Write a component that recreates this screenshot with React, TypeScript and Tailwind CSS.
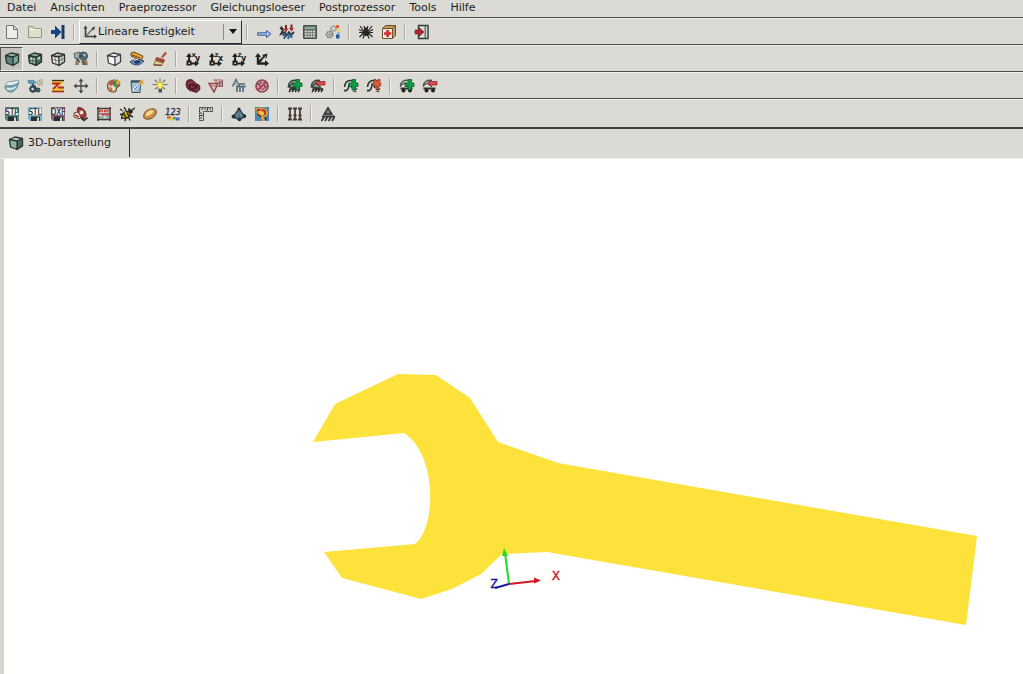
import type { ReactNode } from "react";

interface Tool {
  /** Accessible name of the button */
  label: string;
  icon: ReactNode;
  /** Shown as pressed in */
  active?: boolean;
}

interface IconProps {
  children: ReactNode;
}

/** 16x16 drawing area shared by all toolbar icons. */
function Icon({ children }: IconProps) {
  return (
    <svg viewBox="0 0 16 16" className="h-4 w-4 shrink-0" fill="none" aria-hidden="true">
      {children}
    </svg>
  );
}

interface CubeProps {
  front: string;
  top: string;
  side: string;
  line?: string;
  children?: ReactNode;
}

function Cube({ front, top, side, line = "#26302c", children }: CubeProps) {
  return (
    <Icon>
      <path d="M1.5 4.5 7 2l7.5 1.5L9 6z" fill={top} />
      <path d="M1.5 4.5 9 6v8.5L2.5 12z" fill={front} />
      <path d="M9 6l5.500-2.500V11L9 14.500z" fill={side} />
      {children}
      <path
        d="M1.500 4.500 7 2l7.500 1.500V11L9 14.500 2.500 12zM1.500 4.500 9 6v8.500M9 6l5.500-2.500"
        stroke={line}
        strokeWidth="1.300"
        strokeLinejoin="round"
      />
    </Icon>
  );
}

interface FloppyProps {
  text: string;
  color: string;
}

function Floppy({ text, color }: FloppyProps) {
  return (
    <Icon>
      <path d="M1 1h14v14H3l-2-2z" fill={color} />
      <path d="M2 2h12v7H2z" fill="#f1f3f1" />
      <text x="8" y="8.500" textAnchor="middle" fontSize="8" fontFamily="DejaVu Sans Condensed, sans-serif" fill="#1d2426" stroke="#1d2426" strokeWidth="0.200">
        {text}
      </text>
      <path d="M4 10.500h9V15H4z" fill="#24302e" />
      <path d="M10 11.500h2V15h-2z" fill="#d3d8d2" />
    </Icon>
  );
}

interface AxesProps {
  up: string;
  right: string;
}

function AxesView({ up, right }: AxesProps) {
  return (
    <Icon>
      <path d="M4 13V4M3 12.500h9" stroke="#222" strokeWidth="2" />
      <path d="M1 6l3-4 3 4zM10 9.500l4 3-4 3zM1.500 9.500h5v5h-5z" fill="#222" />
      <path d="M3.500 11.500h1.500v1.500H3.500z" fill="#dbdad5" />
      <text x="6.500" y="6" fontSize="7" fontWeight="bold" fontFamily="DejaVu Sans, sans-serif" fill="#222">
        {up}
      </text>
      <text x="10" y="10" fontSize="8" fontWeight="bold" fontFamily="DejaVu Sans, sans-serif" fill="#222">
        {right}
      </text>
    </Icon>
  );
}

const plus = <path d="M9 1.500h3.500V5H15v3.500h-2.500V12H9V8.500H6V5h3z" fill="#139a46" stroke="#0a5b2b" strokeWidth="0.800" />;
const minus = <path d="M6.500 3.500H15V7H6.500z" fill="#dd4a4c" stroke="#8d2a2d" strokeWidth="0.800" />;

interface SelectionProps {
  kind: "surface" | "curve" | "node";
  sign: ReactNode;
}

/** Boundary condition icons: a dark symbol with a plus or minus on top. */
function SelectionIcon({ kind, sign }: SelectionProps) {
  return (
    <Icon>
      {kind === "surface" && (
        <>
          <path d="M1.500 9C1 4 5 1.500 10 2.500M1.500 9l4-4 5 4-2 1z" stroke="#33443b" strokeWidth="1.300" fill="#93a698" />
          <path d="M2.500 11h10.500" stroke="#222" strokeWidth="1.600" />
          <path d="M2 14l2-3M5 14l2-3M8 14l2-3M11 14l2-3" stroke="#222" strokeWidth="1.400" />
        </>
      )}
      {kind === "curve" && (
        <>
          <path d="M1.500 9C2 3 6 1.500 11 3M1 12.500c4 1 5-3 5-7M7 5l2 5" stroke="#26332c" strokeWidth="1.500" />
          <path d="M1 12.500h3M10 13.500l4-3M11 11l2 3" stroke="#35442b" strokeWidth="1.500" />
        </>
      )}
      {kind === "node" && (
        <>
          <path d="M1.500 9C1 4 5 1.500 10 2.500M2 7l4-2 4 4" stroke="#4a504c" strokeWidth="1.300" />
          <path d="M1.500 9.500h12v2h-12z" fill="#3a3535" />
          <circle cx="4.500" cy="12.500" r="2" fill="#26211f" />
          <circle cx="11" cy="12.500" r="2" fill="#26211f" />
        </>
      )}
      {sign}
    </Icon>
  );
}

const axesIcon = (
  <Icon>
    <path d="M3.500 3v9.500H14" stroke="#3a3e3c" strokeWidth="1.600" />
    <path d="M4 12l8-8.500" stroke="#666a67" strokeWidth="1.300" />
    <path d="M1.500 4.500l2-3 2 3zM12 10.500l3 2-3 2zM9.500 4l3.500-1.500-1 4z" fill="#3a3e3c" />
  </Icon>
);

const isometry = (
  <Icon>
    <path d="M4 13V4M3 12.500h9M4 12l7-7" stroke="#242424" strokeWidth="2.400" />
    <path d="M1 6l3-4 3 4zM11 9l4 3.500-4 3zM8 4l5.500-1.500-1 5z" fill="#242424" />
    <path d="M8 9l4-4" stroke="#9a9a96" />
  </Icon>
);

const newFile = (
  <Icon>
    <path d="M2.500 1.500h7l4 4v9h-11z" fill="#eeeeeb" stroke="#737572" />
    <path d="M9.500 1.500v4h4" stroke="#737572" />
  </Icon>
);

const openFolder = (
  <Icon>
    <path d="M1.500 13.500v-11H6l1 2h7.500v9z" fill="#e0dfca" stroke="#93937e" />
    <path d="M2 5.500h12" stroke="#f6f5e6" />
  </Icon>
);

const importIcon = (
  <Icon>
    <path d="M1 6h4V1.500L11.500 8 5 14.500V10H1z" fill="#17428c" />
    <path d="M11.500 1h3v14h-3z" fill="#1c3868" />
  </Icon>
);

const arrowRight = (
  <Icon>
    <path d="M1.500 8.800h9V6.500l4.500 3.500-4.500 3.500v-2.300h-9z" fill="#a9c1ea" stroke="#3c5aa0" />
  </Icon>
);

const solverIcon = (
  <Icon>
    <path d="M7 1v5M12.500 0.500v5" stroke="#7e2226" strokeWidth="2" />
    <path d="M4.500 4.500h5L7 8zM10 4h5l-2.500 3.500z" fill="#b92b30" />
    <path d="M1 4l3 2-2 4 4-2 1 4 3-4 2 3 3-3" stroke="#28343e" strokeWidth="1.800" />
    <path d="M3 10l3 2-1 3M8 10l2 2-1 3M13 10l-1 4" stroke="#34608e" strokeWidth="2" />
    <path d="M2 2.500l2 3" stroke="#28343e" strokeWidth="1.500" />
  </Icon>
);

const calculator = (
  <Icon>
    <path d="M1.500 1.500h13v13h-13z" fill="#69736c" stroke="#465049" />
    <path d="M3 3h10v2H3z" fill="#8caa93" />
    <path d="M3 7.500h10M3 10h10M3 12.500h10" stroke="#dfe2dc" strokeWidth="1.400" strokeDasharray="1.900 0.800" />
  </Icon>
);

const gears = (
  <Icon>
    <circle cx="4.500" cy="10.500" r="3" fill="#d6d8d7" stroke="#7d8182" strokeWidth="2" strokeDasharray="2 0.700" />
    <circle cx="8.500" cy="4.500" r="2.500" fill="#d6d8d7" stroke="#8e9193" strokeWidth="1.700" strokeDasharray="1.600 0.600" />
    <circle cx="4.500" cy="10.500" r="1" fill="#5c6061" />
    <path d="M11 1h3v3h-3z" fill="#e26045" />
    <path d="M12 4h3v4h-3z" fill="#efd650" />
    <path d="M12 8h3v2.500h-3z" fill="#75c5dc" />
    <path d="M11 10.500h3.500v4H11z" fill="#31559f" />
  </Icon>
);

const spider = (
  <Icon>
    <path d="M2 2l4 5M6 2l1.500 4M14 2l-4 5M10 2 8.500 6M1 8.500h14M1.500 13l4-4M14.500 13l-4-4M5 14.500l1.500-4M11 14.500l-1.500-4M1 5.500l4 2M15 5.500l-4 2" stroke="#252623" strokeWidth="1.200" />
    <circle cx="8" cy="5.500" r="2" fill="#252623" />
    <ellipse cx="8" cy="9" rx="3.200" ry="3" fill="#252623" />
  </Icon>
);

const firstAid = (
  <Icon>
    <path d="M1.500 4.500l3-3h10v10l-3 3h-10z" fill="#c09a60" stroke="#66512c" />
    <path d="M1.500 4.500h10v10h-10z" fill="#f0e9dc" stroke="#66512c" />
    <path d="M11.500 4.500l3-3" stroke="#66512c" />
    <path d="M5.300 6h2.600v2.200h2.300v2.600H7.900V13H5.300v-2.200H3V8.200h2.300z" fill="#d12a30" />
  </Icon>
);

const exitIcon = (
  <Icon>
    <path d="M4.500 1.500h9.500v13H4.500z" fill="#d6dcda" stroke="#333a39" strokeWidth="1.400" />
    <path d="M10.500 2h1.500v12h-1.500z" fill="#68746f" />
    <path d="M1 6h4V3.500L10 8l-5 4.500V10H1z" fill="#b3262d" stroke="#7a1a20" strokeWidth="0.600" />
  </Icon>
);

const viewer = (
  <Icon>
    <path d="M1 2.500l6-1.500v6L2 7.500z" fill="#9aa9ad" stroke="#5c686d" />
    <circle cx="10.500" cy="5" r="4" fill="#4b6e88" stroke="#3d4a53" />
    <path d="M3 8h3v6H2zM8 9h6l1 5H9z" fill="#8d8068" />
    <path d="M4 8l3 3M7 5h3M10 10l2 4" stroke="#4e4535" strokeWidth="1.400" />
    <circle cx="11.500" cy="4" r="1.300" fill="#a4bfce" />
  </Icon>
);

const layers = (
  <Icon>
    <path d="M2 2l3-1 9 4-1 3-3 1-8-4z" fill="#dea138" stroke="#694b20" />
    <path d="M3 4l8 3" stroke="#694b20" />
    <path d="M1 11c3-3 9-3 14-1-3 4-9 6-14 1z" fill="#6f93bb" stroke="#29406a" />
    <ellipse cx="8" cy="11" rx="3" ry="1.700" fill="#22375c" />
    <path d="M5 9l4-.5" stroke="#dce8ef" />
  </Icon>
);

const brush = (
  <Icon>
    <path d="M14 1.500 9.500 7" stroke="#c18d71" strokeWidth="2.600" />
    <path d="M14 1.500 10.500 6" stroke="#b1392c" strokeWidth="1.300" />
    <path d="M4.500 6.500l8 2.500-1 2.500-8-2z" fill="#ba4937" stroke="#69221c" strokeWidth="0.700" />
    <path d="M3.500 9.500l7.500 2.500-1.500 2.500-8-.5z" fill="#e3cd95" stroke="#806436" strokeWidth="0.800" />
    <path d="M2 13.800l8 .5" stroke="#6b2a1e" />
  </Icon>
);

const dish = (
  <Icon>
    <path d="M1 8c0 4 3 6 6 6s6-3 7.500-9C11 8 5 9 1 8z" fill="#84b4bf" stroke="#567f8b" />
    <path d="M2 7c0-3 3-4 6-3.500L14 2l1 2c-3 3-9 4.500-13 3z" fill="#e3eeee" stroke="#7b9ba2" />
    <path d="M3 10.500c3 1 6 .5 9-1.500" stroke="#e5f3f2" strokeWidth="1.400" />
  </Icon>
);

const satellite = (
  <Icon>
    <path d="M1 2.500h6l2 2-3 2-5-2z" fill="#5b9cba" stroke="#41728a" strokeWidth="0.600" />
    <circle cx="6" cy="11" r="3.300" fill="#3b555f" stroke="#24363e" />
    <circle cx="5.500" cy="11" r="1.200" fill="#d9e4e6" />
    <circle cx="11" cy="12" r="2" fill="#3e6d85" stroke="#24363e" />
    <path d="M5 6l4 3" stroke="#2f4954" strokeWidth="1.500" />
    <path d="M10 2.500c1 1 1 3 0 4.500M12 1.500c1.500 2 1.500 5 0 6.500M14 1c1.500 2.500 1.500 5 0 7" stroke="#9a9a5e" />
  </Icon>
);

const zIcon = (
  <Icon>
    <path d="M2 2h12v3L8 9h6v5H2v-3l6-4H2z" fill="#efc63d" />
    <path d="M2 2.500h12" stroke="#3c2a24" strokeWidth="1.300" />
    <path d="M2 5.500h7l-6 5.500M8 9.500h6" stroke="#b42c26" strokeWidth="1.800" />
    <path d="M2 13.500h12" stroke="#a22a25" strokeWidth="1.600" />
  </Icon>
);

const move = (
  <Icon>
    <path d="M8 3v10M3 8h10" stroke="#454743" strokeWidth="1.300" />
    <path d="M8 0.500 5.500 3.500h5zM8 15.500l-2.500-3h5zM0.500 8l3-2.500v5zM15.500 8l-3-2.500v5z" fill="#454743" />
  </Icon>
);

const palette = (
  <Icon>
    <path d="M1.500 8c0-4 3-6 7-6s6 2 5 5-3 1-3 3 0 4-3 4-6-2-6-6z" fill="#dfcda5" stroke="#5f4634" strokeWidth="1.200" />
    <path d="M2.500 5l4-3 1 4-3 2z" fill="#c54c3b" />
    <path d="M7 3l4 0 2 4-4 2-2-2z" fill="#39875b" />
    <path d="M3 9l3 1 1 4-3-1z" fill="#cf6a46" />
    <path d="M6 8l3 3-2 1z" fill="#f3efdc" />
    <path d="M12 1l.8 1.700L15 3l-1.500 1.500L14 7l-2-1-2 1 .5-2.500L9 3l2.200-.3z" fill="#dfa93a" />
  </Icon>
);

const notepad = (
  <Icon>
    <path d="M2 3h10l-1 11.500H3z" fill="#9dbed5" stroke="#36566b" />
    <path d="M2 3.500h10" stroke="#36454e" strokeWidth="2" />
    <path d="M4 12.500l7-7" stroke="#edf5f8" strokeWidth="2.400" />
    <path d="M5 12l6.500-7" stroke="#51646d" />
    <path d="M12.500 1l.8 1.700 2.200.3L14 4.500l.5 2.500-2-1-2 1 .5-2.500L9.500 3l2.200-.3z" fill="#dfa93a" />
  </Icon>
);

const bulb = (
  <Icon>
    <path d="M8 0.500v2.500M3 2l2 2M13 2l-2 2M0.500 6.500H4M12 6.500h3.500M3 11l2-1.500M13 11l-2-1.500" stroke="#77753f" strokeWidth="1.100" />
    <path d="M8 4a3 3 0 0 0-2 5.300V11h4V9.300A3 3 0 0 0 8 4z" fill="#fbf15c" stroke="#8c8540" strokeWidth="0.800" />
    <path d="M6.500 11h3.500v3.500H6.500z" fill="#4f5560" />
  </Icon>
);

const part = (
  <Icon>
    <path d="M1.500 4c1-3 5-3 7-1l3 3c3 0 4 3 3 6l-3 2.500L7 13c-4 0-7-5-5.500-9z" fill="#742936" stroke="#481d25" />
    <ellipse cx="8" cy="9" rx="3.500" ry="2" stroke="#43171f" strokeWidth="1.300" transform="rotate(20 8 9)" />
    <path d="M3.500 5l4-1M6 9h3M10 12l3-1" stroke="#a86570" strokeDasharray="1.500 1" />
  </Icon>
);

const triangleMesh = (
  <Icon>
    <path d="M1 5.500h9L6 14z" stroke="#9b414b" strokeWidth="1.500" />
    <path d="M5.500 2h9v6.500H9.500M3 8h5M8 2v5M11.500 3v5M8 5h6" stroke="#a9525b" />
    <path d="M12 4h3M12 7h3" stroke="#555" />
  </Icon>
);

const elementType = (
  <Icon>
    <path d="M1.500 8.500 5 1.500l3.500 7M3 6h4" stroke="#68777b" strokeWidth="1.700" />
    <path d="M3 6.500l3-3 1 4z" fill="#a9b5b9" />
    <path d="M5 8.500h10M6 14V9M9 9v5M12 9v5M8 6h6" stroke="#496378" strokeWidth="1.600" />
  </Icon>
);

const forbidden = (
  <Icon>
    <circle cx="8" cy="8" r="6" fill="#d6a9b1" stroke="#8d4455" strokeWidth="1.700" />
    <path d="M3 7l5-3M8 12l5-4M5 5l2 6M10 4l1 5" stroke="#7a5a66" strokeWidth="1.500" />
    <path d="M4 12l8-8" stroke="#c23a46" strokeWidth="2" />
  </Icon>
);

const rocket = (
  <Icon>
    <path d="M5 1.500c5 0 8 3 8 8l-2 3C6 12 3 7 5 1.500z" fill="#a3392f" stroke="#54221f" />
    <circle cx="8.500" cy="6.500" r="2" fill="#e8dcd7" />
    <path d="M1 7l4-1 3 5-2 2-5-2z" fill="#f0e4df" stroke="#6b3a35" />
    <path d="M2 9l4 2" stroke="#9e3a33" strokeWidth="1.400" />
    <path d="M8 12l3 2.500 3.500-3" stroke="#3d2824" strokeWidth="1.700" />
  </Icon>
);

const abacus = (
  <Icon>
    <path d="M2 1v14M14 1v14M1 2.500h14M1 13.500h14" stroke="#463634" strokeWidth="1.500" />
    <path d="M3 8h10" stroke="#463634" />
    <path d="M3 5h4M8 5h5M6 8.500h7" stroke="#cf4444" strokeWidth="2.600" strokeDasharray="2 0.500" />
    <path d="M3 11.500h5M10 11.500h3" stroke="#629ba1" strokeWidth="2" strokeDasharray="2 0.500" />
  </Icon>
);

const bee = (
  <Icon>
    <path d="M1 3l6 4M5 1l3 5M13 4l3-2M10 2v3M1 8.500l6-1M2 13l4-4M6 15l1-4M11 14.500 9 10M14 11l-4-2" stroke="#252519" strokeWidth="1.400" />
    <ellipse cx="7" cy="9" rx="4.500" ry="3" fill="#d7b51e" stroke="#282716" strokeWidth="1.300" transform="rotate(-30 7 9)" />
    <path d="M5 8l2 4M8 6.500l2 4" stroke="#282716" strokeWidth="1.500" />
    <circle cx="11.500" cy="5.500" r="2.300" fill="#282716" />
    <path d="M3 4.500l4 2" stroke="#e6dfa0" />
  </Icon>
);

const planet = (
  <Icon>
    <ellipse cx="8" cy="8" rx="7" ry="4.500" fill="#cf8f42" stroke="#7e522c" transform="rotate(-32 8 8)" />
    <ellipse cx="7.500" cy="7" rx="4.500" ry="2" fill="#f7d592" transform="rotate(-32 7.500 7)" />
  </Icon>
);

const colorNumbers = (
  <Icon>
    <text x="8" y="9" textAnchor="middle" fontSize="9" fontStyle="italic" fontFamily="DejaVu Sans Condensed, sans-serif" fill="#272d43" stroke="#272d43" strokeWidth="0.300">
      123
    </text>
    <path d="M2 10h4v3H2z" fill="#dc7a39" />
    <path d="M5 11.500h3v3H5z" fill="#e3c73c" />
    <path d="M8 11h3v2.500H8z" fill="#4ca45c" />
    <path d="M11 11.500h3.500v3H11z" fill="#4a66c0" />
  </Icon>
);

const ruler = (
  <Icon>
    <path d="M1.500 1.500h13v4h-9v9h-4z" fill="#d2d2c9" stroke="#3b3c39" strokeDasharray="2 0.500" />
    <path d="M7 2v2M9.500 2v3M12 2v2M2 7h2M2 9.500h3M2 12h2M3 3h2" stroke="#3b3c39" />
  </Icon>
);

const tetra = (
  <Icon>
    <path d="M8 3 2 11l6 2.500 6-2.500z" fill="#6b8ba1" stroke="#2d3f4b" strokeWidth="1.400" />
    <path d="M8 4v8M2 11h12" stroke="#4a6273" />
    <circle cx="8" cy="3" r="1.600" fill="#22313b" />
    <circle cx="2.500" cy="10.500" r="1.900" fill="#22313b" />
    <circle cx="13.500" cy="10" r="1.800" fill="#22313b" />
    <circle cx="8.500" cy="13.500" r="1.800" fill="#22313b" />
  </Icon>
);

const resultPlot = (
  <Icon>
    <path d="M1 1h14v14H1z" fill="#4a86b8" />
    <path d="M2 2c4-1 9-1 11 2s0 7-3 8l1 3H8l-1-4-4-1z" fill="#e09a36" />
    <path d="M3 3h4l-1 4-3-1z" fill="#b0382b" />
    <path d="M8 4c4 0 4 4 1 5" stroke="#b0382b" strokeWidth="1.800" />
    <path d="M5 5c1 3 4 1 4 4" stroke="#f4df55" strokeWidth="1.800" />
    <path d="M3 8l4 3M11 11l1 3" stroke="#352d25" strokeWidth="1.500" />
  </Icon>
);

const bolts = (
  <Icon>
    <path d="M3 2v12M8 2v12M13 2v12" stroke="#443633" strokeWidth="1.700" />
    <path d="M1 2.500h4M6 2.500h4M11 2.500h4M1 13.500h4M6 13.500h4M11 13.500h4M1.500 9.500h3M6.500 9.500h3M11.500 9.500h3" stroke="#443633" strokeWidth="2" />
  </Icon>
);

const support = (
  <Icon>
    <path d="M8 1l4.500 7.500h-9z" fill="#4d4d4d" stroke="#333" />
    <path d="M8 4.500v3" stroke="#b3b3ae" />
    <path d="M2 10.500h13" stroke="#333" strokeWidth="2" />
    <path d="M1.500 15l2.500-4M5 15l2.500-4M8.500 15l2.500-4M12 15l2.500-4" stroke="#333" strokeWidth="1.700" />
  </Icon>
);

const menuItems = ["Datei", "Ansichten", "Praeprozessor", "Gleichungsloeser", "Postprozessor", "Tools", "Hilfe"];

const fileTools: Tool[] = [
  { label: "Neu", icon: newFile },
  { label: "Oeffnen", icon: openFolder },
  { label: "Importieren", icon: importIcon },
];

const solverTools: Tool[][] = [
  [
    { label: "Weiter", icon: arrowRight },
    { label: "Gleichungsloeser", icon: solverIcon },
    { label: "Rechner", icon: calculator },
    { label: "Einstellungen", icon: gears },
  ],
  [
    { label: "Netzgenerator", icon: spider },
    { label: "Reparieren", icon: firstAid },
  ],
  [{ label: "Beenden", icon: exitIcon }],
];

const viewTools: Tool[][] = [
  [
    { label: "Flaechen", icon: <Cube front="#5f8578" top="#9dbcad" side="#7ea594" />, active: true },
    {
      label: "Flaechen mit Netz",
      icon: (
        <Cube front="#3f5a50" top="#8fab9e" side="#4d6a5f">
          <path d="M3 6.500h2.500V9H3zM6.500 7h2v2.500h-2zM3.500 10H5.500v1.500h-2zM6.500 10.500h2v2h-2zM10.500 6.500l2.500-1v2.500l-2.500 1z" fill="#b9d5c7" />
        </Cube>
      ),
    },
    {
      label: "Drahtgitter",
      icon: (
        <Cube front="#e4e5df" top="#e4e5df" side="#dadbd6">
          <path d="M2 8l7 2 5.500-3M5 5.500 6 13M12 4.500v8M4.500 3.500l7.500 1.500" stroke="#444b48" strokeWidth="0.900" strokeDasharray="1.500 0.700" />
        </Cube>
      ),
    },
    { label: "Betrachter", icon: viewer },
  ],
  [
    { label: "Umriss", icon: <Cube front="#f7f7f5" top="#ededea" side="#e5e5e3" line="#3a3d45" /> },
    { label: "Ebenen", icon: layers },
    { label: "Pinsel", icon: brush },
  ],
  [
    { label: "XY-Ansicht", icon: <AxesView up="x" right="y" /> },
    { label: "XZ-Ansicht", icon: <AxesView up="z" right="x" /> },
    { label: "YZ-Ansicht", icon: <AxesView up="z" right="y" /> },
    { label: "Isometrie", icon: isometry },
  ],
];

const prepTools: Tool[][] = [
  [
    { label: "Geometrie", icon: dish },
    { label: "Lasten", icon: satellite },
    { label: "Z-Koordinate", icon: zIcon },
    { label: "Verschieben", icon: move },
  ],
  [
    { label: "Farben", icon: palette },
    { label: "Notizen", icon: notepad },
    { label: "Licht", icon: bulb },
  ],
  [
    { label: "Bauteil", icon: part },
    { label: "Netz verfeinern", icon: triangleMesh },
    { label: "Elementtyp", icon: elementType },
    { label: "Loeschen", icon: forbidden },
  ],
  [
    { label: "Flaeche hinzufuegen", icon: <SelectionIcon kind="surface" sign={plus} /> },
    { label: "Flaeche entfernen", icon: <SelectionIcon kind="surface" sign={minus} /> },
  ],
  [
    { label: "Kurve hinzufuegen", icon: <SelectionIcon kind="curve" sign={plus} /> },
    {
      label: "Kurve entfernen",
      icon: (
        <SelectionIcon
          kind="curve"
          sign={<path d="M8 1.500h2l1 2 1-2h2v3l1 1-1 3h-2l1 3h-3V8H8L6.500 5.500 8 4.500z" fill="#d85b3b" stroke="#85351f" strokeWidth="0.800" />}
        />
      ),
    },
  ],
  [
    { label: "Lager hinzufuegen", icon: <SelectionIcon kind="node" sign={plus} /> },
    { label: "Lager entfernen", icon: <SelectionIcon kind="node" sign={minus} /> },
  ],
];

const exportTools: Tool[][] = [
  [
    { label: "STP-Datei", icon: <Floppy text="STP" color="#51887a" /> },
    { label: "STL-Datei", icon: <Floppy text="STL" color="#79aec7" /> },
    { label: "DXF-Datei", icon: <Floppy text="DXF" color="#8f5b7b" /> },
    { label: "Start", icon: rocket },
    { label: "Abakus", icon: abacus },
    { label: "Biene", icon: bee },
    { label: "Planet", icon: planet },
    { label: "Farbwerte", icon: colorNumbers },
  ],
  [{ label: "Messen", icon: ruler }],
  [
    { label: "Tetraeder", icon: tetra },
    { label: "Ergebnisse", icon: resultPlot },
  ],
  [{ label: "Schrauben", icon: bolts }],
  [{ label: "Einspannung", icon: support }],
];

function Separator() {
  return (
    <div className="flex w-[10px] shrink-0 justify-center" aria-hidden="true">
      <span className="h-4 w-[2px] border-l border-[#aaa9a4] bg-[#f2f1ed]" />
    </div>
  );
}

function ToolButton({ label, icon, active }: Tool) {
  return (
    <button
      type="button"
      aria-label={label}
      aria-pressed={active}
      className={
        active
          ? "flex h-6 w-[23px] shrink-0 items-center justify-center border border-t-[#55544f] border-r-[#f4f3ef] border-b-[#f4f3ef] border-l-[#55544f] bg-[#c3c2bd]"
          : "flex h-6 w-[23px] shrink-0 items-center justify-center"
      }
    >
      {icon}
    </button>
  );
}

function ToolGroups({ groups }: { groups: Tool[][] }) {
  return (
    <>
      {groups.map((group, index) => (
        <div key={group[0].label} className="flex items-center">
          {index > 0 && <Separator />}
          {group.map((tool) => (
            <ToolButton key={tool.label} {...tool} />
          ))}
        </div>
      ))}
    </>
  );
}

interface ToolbarProps {
  label: string;
  children: ReactNode;
}

function Toolbar({ label, children }: ToolbarProps) {
  return (
    <div
      role="toolbar"
      aria-label={label}
      className="flex h-[27px] items-center border-t border-b border-t-[#f1f0ec] border-b-[#4b4a48]"
    >
      {children}
    </div>
  );
}

function AnalysisSelect() {
  return (
    <div className="relative flex h-6 w-[163px] shrink-0 items-center border border-t-white border-r-[#2c2b2a] border-b-[#2c2b2a] border-l-white pl-[2px]">
      {axesIcon}
      <select
        aria-label="Analyseart"
        defaultValue="Lineare Festigkeit"
        className="h-full min-w-0 flex-1 appearance-none bg-transparent pt-[2px] text-[11px] outline-none"
      >
        <option>Lineare Festigkeit</option>
      </select>
      <span className="pointer-events-none flex h-4 w-[18px] items-center justify-center border-l border-[#8b8a86]">
        <svg viewBox="0 0 8 5" className="h-[5px] w-2" aria-hidden="true">
          <path d="M0 0h8L4 5z" fill="#111" />
        </svg>
      </span>
    </div>
  );
}

/** 3D view with the wrench model and the coordinate triad. */
function Viewport() {
  return (
    <main className="flex flex-1 border-l-4 border-[#d6d5d0] bg-white">
      <svg viewBox="0 0 1019 515" preserveAspectRatio="xMinYMin meet" className="w-full" role="img" aria-label="3D-Modell">
        <path
          d="M309 283 331 245 394 215 432 216 466 239 494 283 554 304 973 377 962 466 543 393 498 395 477 415 448 430 417 440 338 419 320 393 411 385C432 370 434 296 400 274z"
          fill="#fce23b"
        />
        <path d="M505 425 501 394" stroke="#1fdc2b" strokeWidth="2" />
        <path d="M500 389l4 8h-6z" fill="#1fdc2b" />
        <path d="M505 425 532 422" stroke="#cf1a1f" strokeWidth="2" />
        <path d="M537 421.500l-7-3v6z" fill="#cf1a1f" />
        <path d="M505 425 491 429" stroke="#1818a0" strokeWidth="2" />
        <g fontSize="13" fontFamily="DejaVu Sans Mono, monospace" strokeWidth="0.400">
          <text x="548" y="421" fill="#cf1a1f" stroke="#cf1a1f">
            X
          </text>
          <text x="486" y="429" fill="#1818a0" stroke="#1818a0">
            Z
          </text>
        </g>
      </svg>
    </main>
  );
}

export default function App() {
  return (
    <div className="flex min-h-screen flex-col bg-[#dbdad5] font-['DejaVu_Sans',sans-serif] text-[11px] text-[#1c1c1c]">
      <nav className="flex h-[18px] items-center gap-[14px] border-b border-[#4b4a48] px-[7px] pb-[2px]">
        {menuItems.map((item) => (
          <button key={item} type="button" className="leading-4">
            {item}
          </button>
        ))}
      </nav>

      <div className="flex flex-col border-b-2 border-[#444342]">
        <Toolbar label="Datei">
          {fileTools.map((tool) => (
            <ToolButton key={tool.label} {...tool} />
          ))}
          <Separator />
          <AnalysisSelect />
          <Separator />
          <ToolGroups groups={solverTools} />
        </Toolbar>
        <Toolbar label="Ansichten">
          <ToolGroups groups={viewTools} />
        </Toolbar>
        <Toolbar label="Praeprozessor">
          <ToolGroups groups={prepTools} />
        </Toolbar>
        <div role="toolbar" aria-label="Export" className="flex h-7 items-center border-t border-[#f1f0ec]">
          <ToolGroups groups={exportTools} />
        </div>
      </div>

      <div role="tablist" className="flex h-[30px] items-start border-b border-[#f1f0ec]">
        <button
          type="button"
          role="tab"
          aria-selected="true"
          className="flex h-7 w-[130px] items-center gap-1 border-r border-[#2c2b2a] pl-2"
        >
          <Cube front="#8fb3a6" top="#c0d3c8" side="#49695e" />
          3D-Darstellung
        </button>
      </div>

      <Viewport />
    </div>
  );
}
